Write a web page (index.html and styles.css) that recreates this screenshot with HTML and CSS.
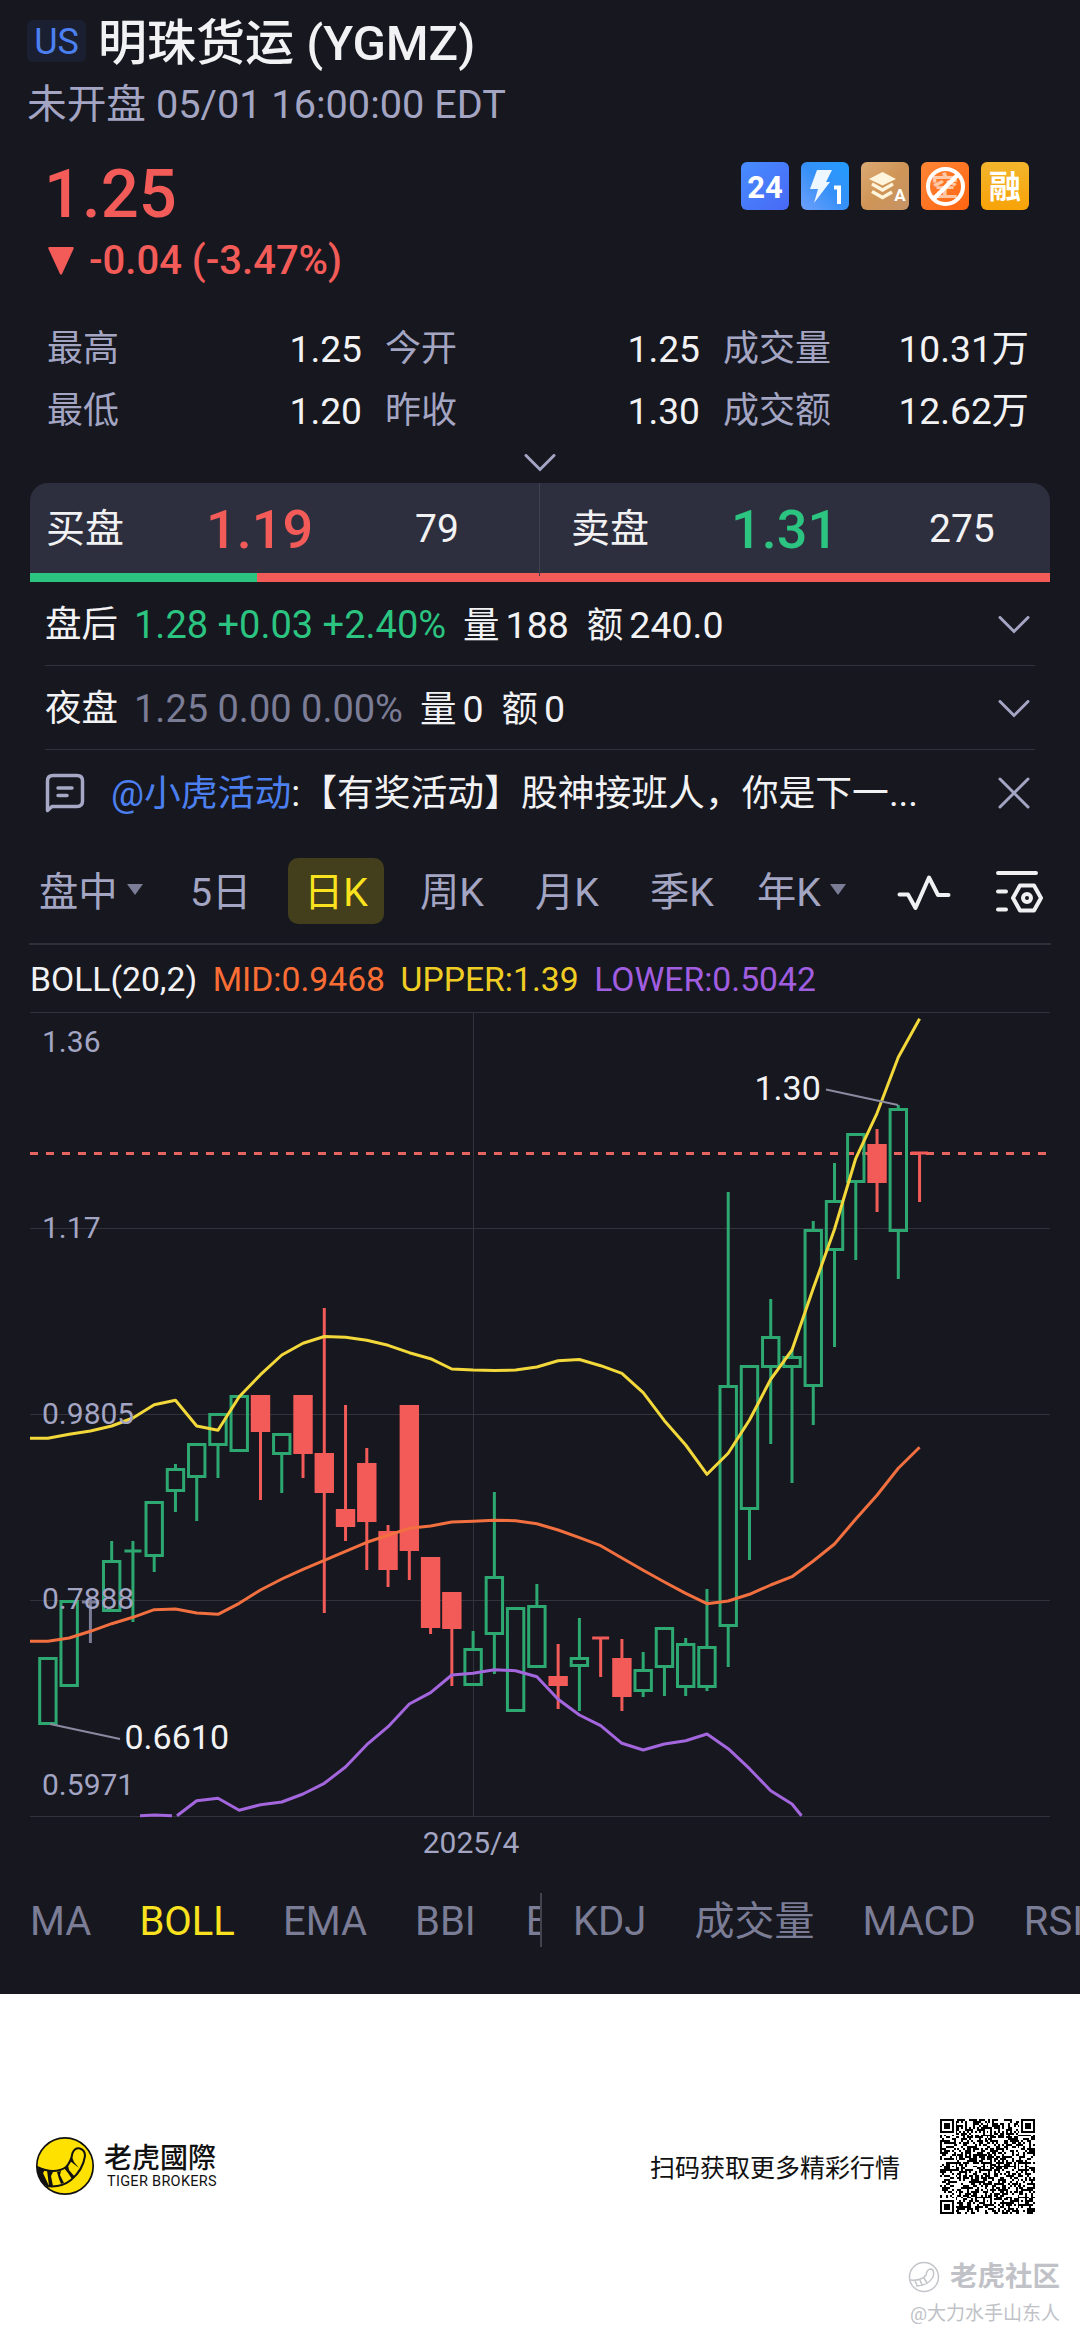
FILE: index.html
```html
<!DOCTYPE html>
<html lang="zh-CN">
  <head>
    <meta charset="UTF-8" />
    <meta name="viewport" content="width=device-width, initial-scale=1.0" />
    <title>明珠货运 (YGMZ)</title>
    <link rel="stylesheet" href="styles.css">
  </head>
  <body>
    <main class="quote-page">
      <header class="header">
        <h1 class="title"><span class="market">US</span>明珠货运 (YGMZ)</h1>
        <div class="status">未开盘 05/01 16:00:00 EDT</div>
      </header>

      <section class="price-block">
        <div>
          <div class="price">1.25</div>
          <div class="change">
            <svg width="26" height="28" viewBox="0 0 26 28"><path d="M1 0H25Q26 0 25.500 2L14 27Q13 28.500 12 27L.5 2Q0 0 1 0Z" fill="#f25b58" /></svg>
            <span>-0.04 (-3.47%)</span>
          </div>
        </div>
        <div class="badges">
          <svg width="48" height="48" viewBox="0 0 48 48">
            <defs><linearGradient id="g1" x1="0" y1="0" x2="1" y2="1"><stop offset="0" stop-color="#478dff" /><stop offset="1" stop-color="#4868f5" /></linearGradient></defs>
            <rect width="48" height="48" rx="6" fill="url(#g1)" />
            <text class="badge-text" x="24" y="36" font-size="31">24</text>
          </svg>
          <svg width="48" height="48" viewBox="0 0 48 48">
            <defs><linearGradient id="g2" x1="0" y1="1" x2="1" y2="0"><stop offset="0" stop-color="#6fa0fb" /><stop offset=".5" stop-color="#3590f8" /><stop offset="1" stop-color="#239cff" /></linearGradient></defs>
            <rect width="48" height="48" rx="6" fill="url(#g2)" />
            <path d="M16 8H31L25 20H29L13 41L17 27H9Z" fill="#eef6ff" />
            <path d="M33 25.500H38V42" fill="none" stroke="#fff" stroke-width="4" />
          </svg>
          <svg width="48" height="48" viewBox="0 0 48 48">
            <defs><linearGradient id="g3" x1="0" y1="0" x2="1" y2="1"><stop offset="0" stop-color="#dcaa76" /><stop offset=".5" stop-color="#cf9556" /><stop offset="1" stop-color="#c69367" /></linearGradient></defs>
            <rect width="48" height="48" rx="6" fill="url(#g3)" />
            <path d="M21.500 10L35 17L21.500 23.500L8 17Z" fill="#fff4dc" />
            <path d="M11 22L21.500 28L32 22M11 29.500L21.500 35.500L31 30" fill="none" stroke="#fff4dc" stroke-width="3.500" />
            <text class="badge-text" x="39" y="39" font-size="17">A</text>
          </svg>
          <svg width="48" height="48" viewBox="0 0 48 48">
            <defs><linearGradient id="g4" x1="0" y1="0" x2="1" y2="1"><stop offset="0" stop-color="#ff8637" /><stop offset="1" stop-color="#ff6410" /></linearGradient></defs>
            <rect width="48" height="48" rx="6" fill="url(#g4)" />
            <text class="badge-text faded" x="24" y="34" font-size="27">空</text>
            <circle cx="24.500" cy="24.500" r="17.500" fill="none" stroke="#fff" stroke-width="4" />
            <path d="M12.500 37L37 12.500" stroke="#fff" stroke-width="4.500" />
          </svg>
          <svg width="48" height="48" viewBox="0 0 48 48">
            <defs><linearGradient id="g5" x1="0" y1="0" x2="0" y2="1"><stop offset="0" stop-color="#f2b52d" /><stop offset="1" stop-color="#f8a308" /></linearGradient></defs>
            <rect width="48" height="48" rx="6" fill="url(#g5)" />
            <text class="badge-text" x="24" y="36" font-size="32">融</text>
          </svg>
        </div>
      </section>

      <section class="stats">
        <div class="stat"><span>最高</span><b>1.25</b></div>
        <div class="stat"><span>今开</span><b>1.25</b></div>
        <div class="stat"><span>成交量</span><b>10.31万</b></div>
        <div class="stat"><span>最低</span><b>1.20</b></div>
        <div class="stat"><span>昨收</span><b>1.30</b></div>
        <div class="stat"><span>成交额</span><b>12.62万</b></div>
      </section>
      <div class="expand">
        <svg class="chevron" width="32" height="18" viewBox="0 0 32 18"><path d="M2 1.500L16 15.500L30 1.500" /></svg>
      </div>

      <section class="book">
        <div class="side bid"><span>买盘</span><strong>1.19</strong><em>79</em></div>
        <div class="side ask"><span>卖盘</span><strong>1.31</strong><em>275</em></div>
      </section>
      <div class="ratio"><i></i></div>

      <section class="sessions">
        <div class="session">
          <span class="name">盘后</span>
          <span class="quote up">1.28 +0.03 +2.40%</span>
          <span class="amount">量<b>188</b></span>
          <span class="amount">额<b>240.0</b></span>
          <svg class="chevron" width="32" height="18" viewBox="0 0 32 18"><path d="M2 1.500L16 15.500L30 1.500" /></svg>
        </div>
        <div class="session">
          <span class="name">夜盘</span>
          <span class="quote flat">1.25 0.00 0.00%</span>
          <span class="amount">量<b>0</b></span>
          <span class="amount">额<b>0</b></span>
          <svg class="chevron" width="32" height="18" viewBox="0 0 32 18"><path d="M2 1.500L16 15.500L30 1.500" /></svg>
        </div>
        <div class="news">
          <svg width="40" height="40" viewBox="0 0 40 40" fill="none" stroke="#a6a8c6" stroke-width="3.500" stroke-linecap="round" stroke-linejoin="round">
            <path d="M2.500 37.500V8Q2.500 2.500 8 2.500H32Q37.500 2.500 37.500 8V28Q37.500 33.500 32 33.500H7Z" />
            <path d="M13 15H27M13 22.500H22" />
          </svg>
          <p><a>@小虎活动</a>:【有奖活动】股神接班人，你是下一...</p>
          <svg class="chevron" width="32" height="32" viewBox="0 0 32 32"><path d="M2 2L30 30M30 2L2 30" /></svg>
        </div>
      </section>

      <nav class="periods">
        <span>盘中<i></i></span>
        <span>5日</span>
        <span class="active">日K</span>
        <span>周K</span>
        <span>月K</span>
        <span>季K</span>
        <span>年K<i></i></span>
        <svg width="54" height="42" viewBox="0 0 54 42" fill="none" stroke="#f0f0f2" stroke-width="4" stroke-linecap="round" stroke-linejoin="round">
          <path d="M2.500 24.500H11L18.500 38L32 7.500L41 25H51.500" />
        </svg>
        <svg width="50" height="46" viewBox="0 0 50 46" fill="none" stroke="#f0f0f2" stroke-width="4" stroke-linecap="round" stroke-linejoin="round">
          <path d="M3 5H41M3 23.500H11M3 41.500H11" />
          <path d="M25 17.500H39L46 30L39 42.500H25L18 30Z" />
          <circle cx="32" cy="30" r="4" />
        </svg>
      </nav>

      <div class="legend">
        <span>BOLL(20,2)</span>
        <span class="mid">MID:0.9468</span>
        <span class="upper">UPPER:1.39</span>
        <span class="lower">LOWER:0.5042</span>
      </div>

      <svg class="chart" id="chart" width="1080" height="858" viewBox="0 12 1080 858">
        <path class="grid" d="M30 12.500H1050M30 228.500H1050M30 414.500H1050M30 600.500H1050M30 816.500H1050M473.500 12V816" />
        <path class="last-price" d="M30 153.500H1050" />
        <g id="candles"></g>
        <g id="bands"></g>
        <path class="leader" d="M826 89.500L898 105M50 724L120 739" />
        <text class="axis" x="42" y="52">1.36</text>
        <text class="axis" x="42" y="238">1.17</text>
        <text class="axis" x="42" y="423.500">0.9805</text>
        <text class="axis" x="42" y="609">0.7888</text>
        <text class="axis" x="42" y="795">0.5971</text>
        <text class="axis" x="471" y="853" text-anchor="middle">2025/4</text>
        <text class="extreme" x="754.500" y="100">1.30</text>
        <text class="extreme" x="124.500" y="749">0.6610</text>
      </svg>

      <nav class="indicators">
        <div class="group main">
          <span>MA</span><span class="active">BOLL</span><span>EMA</span><span>BBI</span><span class="clipped">B</span>
        </div>
        <div class="group sub">
          <span>KDJ</span><span>成交量</span><span>MACD</span><span>RSI</span>
        </div>
      </nav>
    </main>

    <footer class="footer">
      <div class="share">
        <svg width="60" height="60" viewBox="0 0 60 60">
          <circle cx="30" cy="30" r="28.200" fill="#ffe100" stroke="#111" stroke-width="1.700" />
          <path d="M2 31Q20 39 31 31Q36 26 37.500 17Q40 11.500 45 12.500Q50 14 50 20Q48 34 36 44Q26 52 11 50" fill="none" stroke="#111" stroke-width="2" />
          <path d="M2 31L10 34L8 37L14 50L9 49Q3 43 2 31ZM12 34L18 36L16 40L18 50L14 50ZM22 36L26 35L25 39L29 47L26 48L24 43ZM29 32L33 29L34 34L40 41L37 43L33 37ZM35 25L37 21L39 26L44 32Z" fill="#111" />
        </svg>
        <div class="brand">
          <div class="brand-cn">老虎國際</div>
          <div class="brand-en">TIGER BROKERS</div>
        </div>
        <div class="scan">扫码获取更多精彩行情</div>
        <svg id="qr" width="95" height="95" viewBox="0 0 49 49" shape-rendering="crispEdges"></svg>
      </div>
      <div class="watermark">
        <div class="community">
          <svg width="32" height="32" viewBox="0 0 32 32" fill="none" stroke="#c3c5ca" stroke-width="1.500">
            <circle cx="16" cy="16" r="14.500" />
            <path d="M2 19Q14 20 18 14Q19 8 23 8Q27 9 25 16Q20 25 8 25M7 20L9 24M12 19L14 24M16 17L19 22" />
          </svg>
          <span>老虎社区</span>
        </div>
        <div class="author">@大力水手山东人</div>
      </div>
    </footer>
    <script src="script.js"></script>
  </body>
</html>
```

FILE: styles.css
```css
* {
  box-sizing: border-box;
}
body {
  margin: 0;
  width: 1080px;
  background-color: #fff;
  font-family: Roboto, "Noto Sans CJK SC", sans-serif;
  overflow-x: hidden;
}
svg {
  display: block;
  flex: none;
}
b,
em,
i {
  font-style: normal;
  font-weight: 400;
}
.quote-page {
  height: 1994px;
  background-color: #16171f;
  color: #f2f2f4;
  overflow: hidden;
}

/* header */
.header {
  padding: 12px 0 0 27px;
}
.title {
  display: flex;
  margin: 0;
  font-size: 49px;
  font-weight: 500;
  line-height: 64px;
}
.market {
  width: 59px;
  height: 42px;
  margin: 8px 12px 0 0;
  border-radius: 6px;
  background-color: #1a1f32;
  color: #4c80f0;
  font-size: 36px;
  font-weight: 400;
  line-height: 44px;
  text-align: center;
}
.status {
  color: #a3a5c3;
  font-size: 39.700px;
  line-height: 58px;
}
.price-block {
  display: flex;
  justify-content: space-between;
  padding: 20px 51px 0 47px;
  color: #f25b58;
}
.price {
  margin-left: -3px;
  font-size: 67px;
  font-weight: 500;
  line-height: 81px;
}
.change {
  display: flex;
  align-items: center;
  gap: 15px;
  font-size: 40px;
  font-weight: 500;
  line-height: 51px;
}
.change svg {
  margin-left: 1px;
}
.badges {
  display: flex;
  gap: 12px;
  padding-top: 8px;
}
.badge-text {
  fill: #fff;
  font-weight: 700;
  text-anchor: middle;
}
.faded {
  opacity: 0.6;
}

/* key figures */
.stats {
  display: grid;
  grid-template-columns: 315px 315px 306px;
  column-gap: 23px;
  margin: 32px 0 0 47px;
  font-size: 36px;
  line-height: 62px;
}
.stat {
  display: flex;
  justify-content: space-between;
}
.stat span {
  color: #a3a5c3;
}
.stat b {
  font-size: 37.200px;
}
.expand {
  display: flex;
  align-items: center;
  justify-content: center;
  height: 41px;
}
.chevron {
  fill: none;
  stroke: #a3a5c3;
  stroke-width: 3;
  stroke-linecap: round;
}

/* bid / ask */
.book {
  display: grid;
  grid-template-columns: 509px 511px;
  height: 90px;
  margin: 0 30px;
  border-radius: 18px 18px 0 0;
  background-color: #2e2f3e;
}
.side {
  display: grid;
  grid-template-columns: 160px 209px 1fr;
  align-items: center;
  padding-left: 16px;
  font-size: 39px;
  line-height: 93px;
}
.ask {
  grid-template-columns: 160px 198px 1fr;
  padding-left: 31px;
  border-left: 1px solid #40414f;
}
.side strong {
  color: #f25b58;
  font-size: 54px;
  font-weight: 500;
}
.ask strong {
  color: #2bc480;
}
.ratio {
  height: 9px;
  margin: 0 30px;
  background-color: #f25b58;
}
.ratio i {
  display: block;
  width: 22.300%;
  height: 100%;
  background-color: #2bc480;
}

/* extended sessions */
.sessions {
  padding: 0 45px;
  font-size: 36.500px;
  line-height: 60px;
}
.session {
  display: flex;
  align-items: center;
  height: 84px;
  padding-top: 3px;
  border-bottom: 1px solid #30313b;
}
.session .chevron,
.news .chevron {
  margin: 0 5px 0 auto;
}
.quote {
  margin: 0 17px 0 16px;
  font-size: 38px;
}
.up {
  color: #2bc480;
}
.flat {
  color: #7b7c95;
}
.amount {
  margin-right: 18px;
}
.amount b {
  margin-left: 6px;
  font-size: 37.500px;
}
.news {
  display: flex;
  align-items: center;
  height: 86px;
  font-size: 36.800px;
}
.news p {
  margin: 2px 0 0 26px;
  white-space: nowrap;
}
.news a {
  color: #4c80f0;
}

/* period tabs */
.periods {
  display: grid;
  grid-template-columns: 151px 98px 132px 115px 115px 107px 140px 98px 50px;
  align-items: center;
  height: 109px;
  padding: 2px 0 0 39px;
  border-bottom: 2px solid #2e2f39;
  color: #a3a5c3;
  font-size: 39.300px;
  border-image: linear-gradient(to right, #16171f 30px, #2e2f39 30px, #2e2f39 1050px, #16171f 1050px) 1;
}
.periods span {
  padding-top: 4px;
  line-height: 62px;
}
.periods .active {
  width: 96px;
  border-radius: 10px;
  background-color: #433e1b;
  color: #fae31e;
  text-align: center;
}
.periods i {
  display: inline-block;
  margin: 0 0 11px 9px;
  border: 8px solid transparent;
  border-top: 11px solid #7b7c95;
  border-bottom: 0;
}

/* chart */
.legend {
  display: flex;
  gap: 15.500px;
  height: 67px;
  padding: 2px 0 0 30px;
  font-size: 33.700px;
  line-height: 65px;
}
.mid {
  color: #fa6e35;
}
.upper {
  color: #f0cd24;
}
.lower {
  color: #a15ee0;
}
.grid {
  stroke: #31323b;
  stroke-width: 1;
}
.last-price {
  stroke: #e96460;
  stroke-width: 3;
  stroke-dasharray: 8 8;
}
.candle {
  fill: none;
  stroke-width: 3;
}
.candle.rise {
  stroke: #2da871;
}
.candle.fall {
  stroke: #f25b58;
}
.candle.fall rect {
  fill: #f25b58;
}
.candle.even {
  stroke: #7b7c95;
}
.band {
  fill: none;
  stroke-width: 3;
  stroke-linejoin: round;
}
.band-mid {
  stroke: #f27040;
}
.band-upper {
  stroke: #f2d83a;
}
.band-lower {
  stroke: #a366dd;
}
.leader {
  stroke: #8a8ba0;
  stroke-width: 2;
}
.axis {
  fill: #a3a5c3;
  font-size: 30px;
}
.extreme {
  fill: #f2f2f4;
  font-size: 34px;
}

/* indicator tabs */
.indicators {
  display: flex;
  height: 100px;
  align-items: center;
  color: #7b7c95;
  font-size: 40px;
  line-height: 51px;
}
.group {
  display: flex;
  gap: 48px;
  height: 54px;
  overflow: hidden;
  white-space: nowrap;
}
.group span {
  flex: none;
  padding-top: 3px;
}
.main {
  width: 542px;
  padding-left: 30px;
  border-right: 2px solid #41424c;
}
.group .clipped {
  width: 15px;
  margin-left: 2px;
  overflow: hidden;
}
.sub {
  width: 538px;
  padding-left: 31px;
}
.indicators .active {
  color: #fae31e;
}

/* footer */
.footer {
  height: 345px;
  color: #111;
}
.share {
  display: flex;
  align-items: center;
  height: 220px;
  padding: 124px 45px 0 35px;
}
.brand {
  margin-left: 9px;
}
.brand-cn {
  font-family: "Noto Sans CJK TC", sans-serif;
  font-size: 28px;
  font-weight: 500;
  line-height: 32px;
}
.brand-en {
  padding-left: 3px;
  font-size: 14.500px;
  line-height: 20px;
  letter-spacing: 0.300px;
}
.scan {
  margin: 0 40px 0 auto;
  font-size: 25px;
}
.watermark {
  display: flex;
  flex-direction: column;
  align-items: flex-end;
  padding: 43px 20px 0 0;
  color: #c0c2c7;
  text-shadow: -1px -1px 1px #fff;
}
.community {
  display: flex;
  align-items: center;
  gap: 10px;
  font-size: 27.500px;
  font-weight: 700;
  line-height: 40px;
}
.author {
  font-size: 19px;
  line-height: 34px;
}
```

FILE: script.js
```js
const SVG_NS = 'http://www.w3.org/2000/svg';
const FIRST_X = 47.9;
const STEP = 21.26;

function add(parent, tag, attrs) {
  const el = document.createElementNS(SVG_NS, tag);
  for (const key in attrs) el.setAttribute(key, attrs[key]);
  parent.appendChild(el);
  return el;
}

// [kind, high, body top, body bottom, low]
const candles = [
  ['rise', 657, 657, 725, 725],
  ['rise', 600, 600, 687, 687],
  ['even', 599, 602, 602, 643],
  ['rise', 541, 560, 612, 612],
  ['rise', 541, 551, 551, 622],
  ['rise', 501, 501, 557, 572],
  ['rise', 464, 468, 492, 512],
  ['rise', 443, 443, 478, 521],
  ['rise', 413, 413, 446, 478],
  ['rise', 395, 395, 452, 452],
  ['fall', 395, 395, 432, 500],
  ['rise', 433, 433, 455, 493],
  ['fall', 395, 395, 454, 478],
  ['fall', 308, 453, 493, 613],
  ['fall', 405, 509, 527, 541],
  ['fall', 448, 463, 522, 570],
  ['fall', 525, 531, 570, 587],
  ['fall', 405, 405, 551, 580],
  ['fall', 557, 557, 628, 634],
  ['fall', 592, 592, 629, 686],
  ['rise', 631, 648, 686, 686],
  ['rise', 492, 576, 635, 674],
  ['rise', 607, 607, 712, 712],
  ['rise', 584, 605, 668, 668],
  ['fall', 644, 676, 686, 709],
  ['rise', 618, 657, 667, 711],
  ['fall', 638, 638, 638, 677],
  ['fall', 639, 658, 697, 711],
  ['rise', 652, 669, 692, 697],
  ['rise', 627, 627, 668, 696],
  ['rise', 638, 643, 688, 696],
  ['rise', 589, 646, 688, 691],
  ['rise', 192, 385, 627, 667],
  ['rise', 365, 365, 510, 560],
  ['rise', 299, 336, 368, 444],
  ['rise', 350, 356, 368, 483],
  ['rise', 221, 229, 387, 425],
  ['rise', 163, 200, 251, 347],
  ['rise', 133, 133, 183, 260],
  ['fall', 129, 144, 183, 212],
  ['rise', 105, 108, 232, 279],
  ['fall', 153, 153, 153, 202],
];

const upper = [438.3, 434.3, 431, 426, 418, 404.7, 400.3, 426, 430.3, 396.7, 374.7, 355, 343.3, 336.5,
  337.3, 340.3, 345.3, 352.7, 358.7, 369, 370, 370.5, 370, 367, 360.7, 359.5, 365.7, 373.3, 392.7,
  420.7, 445, 474.3, 453.3, 420, 379.3, 350, 288.3, 229.3, 158.3, 113.3, 57.3, 18.7];
const mid = [641.3, 638, 631.3, 623.7, 617.3, 609.7, 609, 613, 614.3, 603.3, 590, 579, 569.3, 560.3,
  551.3, 542.3, 535.3, 528.3, 526, 522, 521.3, 520.3, 520.7, 523.7, 530, 537.7, 545.7, 558, 570.3,
  582, 593.3, 603.7, 601, 594.3, 585, 576.7, 561, 544, 519, 495.3, 468.3, 447.3];
const lower = [800.7, 798.3, 810.3, 804.7, 802, 794, 783.3, 767, 744.7, 726.7, 704, 692.7, 675, 673.3,
  669.7, 670.7, 676.7, 699.3, 715, 725.7, 743.3, 750, 744, 740.7, 734, 748.7, 768.7, 790.7, 804];

const layer = document.getElementById('candles');
candles.forEach(([kind, high, top, bottom, low], i) => {
  const x = FIRST_X + STEP * i;
  const g = add(layer, 'g', { class: 'candle ' + kind });
  if (top === bottom) {
    add(g, 'path', { d: `M${x - 8.5} ${top}H${x + 8.5}M${x} ${high}V${low}` });
    return;
  }
  add(g, 'path', { d: `M${x} ${high}V${top}M${x} ${bottom}V${low}` });
  add(g, 'rect', { x: x - 8.2, y: top + 1.5, width: 16.4, height: bottom - top - 3 });
});

function points(values, from) {
  return values.map((y, i) => `${(FIRST_X + STEP * (i + from)).toFixed(1)} ${y}`).join('L');
}

const bands = document.getElementById('bands');
add(bands, 'path', { class: 'band band-mid', d: 'M30 641.3L' + points(mid, 0) });
add(bands, 'path', { class: 'band band-upper', d: 'M30 438.3L' + points(upper, 0) });
// the lower band leaves the plot at both ends
add(bands, 'path', {
  class: 'band band-lower',
  d: 'M140 815.8L155 815L172 815.8M177 815.8L' + points(lower, 7) + 'L801.5 815.8',
});

// QR code, version 8: 49 x 49 modules
const SIZE = 49;
const grid = [];
let seed = 20250501;
for (let y = 0; y < SIZE; y++) {
  grid.push([]);
  for (let x = 0; x < SIZE; x++) {
    seed = (Math.imul(seed, 1664525) + 1013904223) >>> 0;
    grid[y].push(seed / 4294967296 < 0.5 ? 1 : 0);
  }
}
function square(cx, cy, radius, rings) {
  for (let y = -radius; y <= radius; y++) {
    for (let x = -radius; x <= radius; x++) {
      if (grid[cy + y] === undefined || grid[cy + y][cx + x] === undefined) continue;
      grid[cy + y][cx + x] = rings[Math.max(Math.abs(x), Math.abs(y))];
    }
  }
}
for (let i = 8; i < SIZE - 8; i++) grid[6][i] = grid[i][6] = (i + 1) % 2;
[[3, 3], [45, 3], [3, 45]].forEach(([x, y]) => square(x, y, 4, [1, 1, 0, 1, 0]));
[[24, 6], [6, 24], [24, 24], [42, 24], [24, 42], [42, 42]].forEach(([x, y]) => square(x, y, 2, [1, 0, 1]));
let d = '';
grid.forEach((row, y) => row.forEach((on, x) => {
  if (on) d += `M${x} ${y}h1v1h-1z`;
}));
add(document.getElementById('qr'), 'path', { d, fill: '#000' });
```
